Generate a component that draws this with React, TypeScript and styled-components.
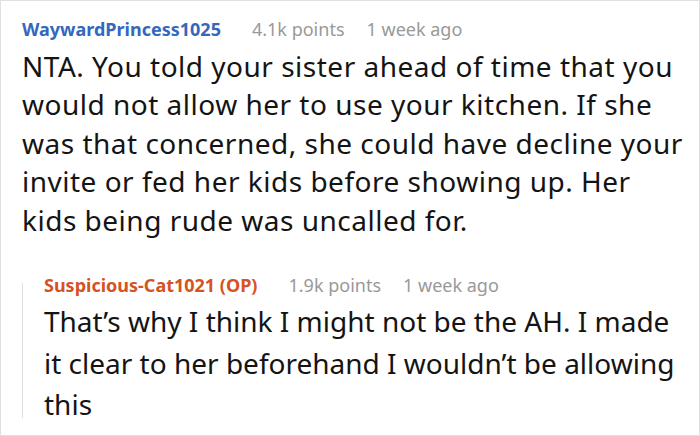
import React from "react";
import styled, { createGlobalStyle } from "styled-components";

const Global = createGlobalStyle`
  html, body { margin: 0; padding: 0; background: #fff; }
  body { font-family: "Noto Sans", "Open Sans", sans-serif; }
`;

const Frame = styled.div`
  box-sizing: border-box;
  width: 700px;
  height: 436px;
  border: 1px solid #e0e0e0;
  padding: 16px 11px 0 21px;
  overflow: hidden;
  background: #fff;
`;

const Comment = styled.div`
  display: flex;
  flex-direction: column;
  min-width: 0;
  flex: 1;
`;

const Header = styled.div`
  display: flex;
  align-items: baseline;
  gap: 22px;
  font-size: 18px;
  line-height: 24px;
  white-space: nowrap;
`;

const Author = styled.span<{ $op?: boolean }>`
  font-weight: 700;
  color: ${(p) => (p.$op ? "#d5531f" : "#3467be")};
  margin-right: 9px;
`;

const Meta = styled.span`
  color: #999;
`;

const Body = styled.p<{ $reply?: boolean }>`
  margin: ${(p) => (p.$reply ? "4px" : "6px")} 0 0 0;
  font-size: 28px;
  line-height: ${(p) => (p.$reply ? "41.6px" : "38.4px")};
  letter-spacing: ${(p) => (p.$reply ? "0" : "0.5px")};
  color: #141414;
`;

const Thread = styled.div`
  display: flex;
  margin-top: 34px;
`;

const ThreadLine = styled.div`
  flex: 0 0 1px;
  background: #e0e0e0;
  margin: 10px 21px 8px 0;
`;

export default function App() {
  return (
    <>
      <Global />
      <Frame>
        <Comment>
          <Header>
            <Author>WaywardPrincess1025</Author>
            <Meta>4.1k points</Meta>
            <Meta>1 week ago</Meta>
          </Header>
          <Body>
            NTA. You told your sister ahead of time that you would not allow her to use your kitchen. If she was that
            concerned, she could have decline your invite or fed her kids before showing up. Her kids being rude was
            uncalled for.
          </Body>
          <Thread>
            <ThreadLine />
            <Comment>
              <Header>
                <Author $op>Suspicious-Cat1021 (OP)</Author>
                <Meta>1.9k points</Meta>
                <Meta>1 week ago</Meta>
              </Header>
              <Body $reply>
                That’s why I think I might not be the AH. I made it clear to her beforehand I wouldn’t be allowing this
              </Body>
            </Comment>
          </Thread>
        </Comment>
      </Frame>
    </>
  );
}
